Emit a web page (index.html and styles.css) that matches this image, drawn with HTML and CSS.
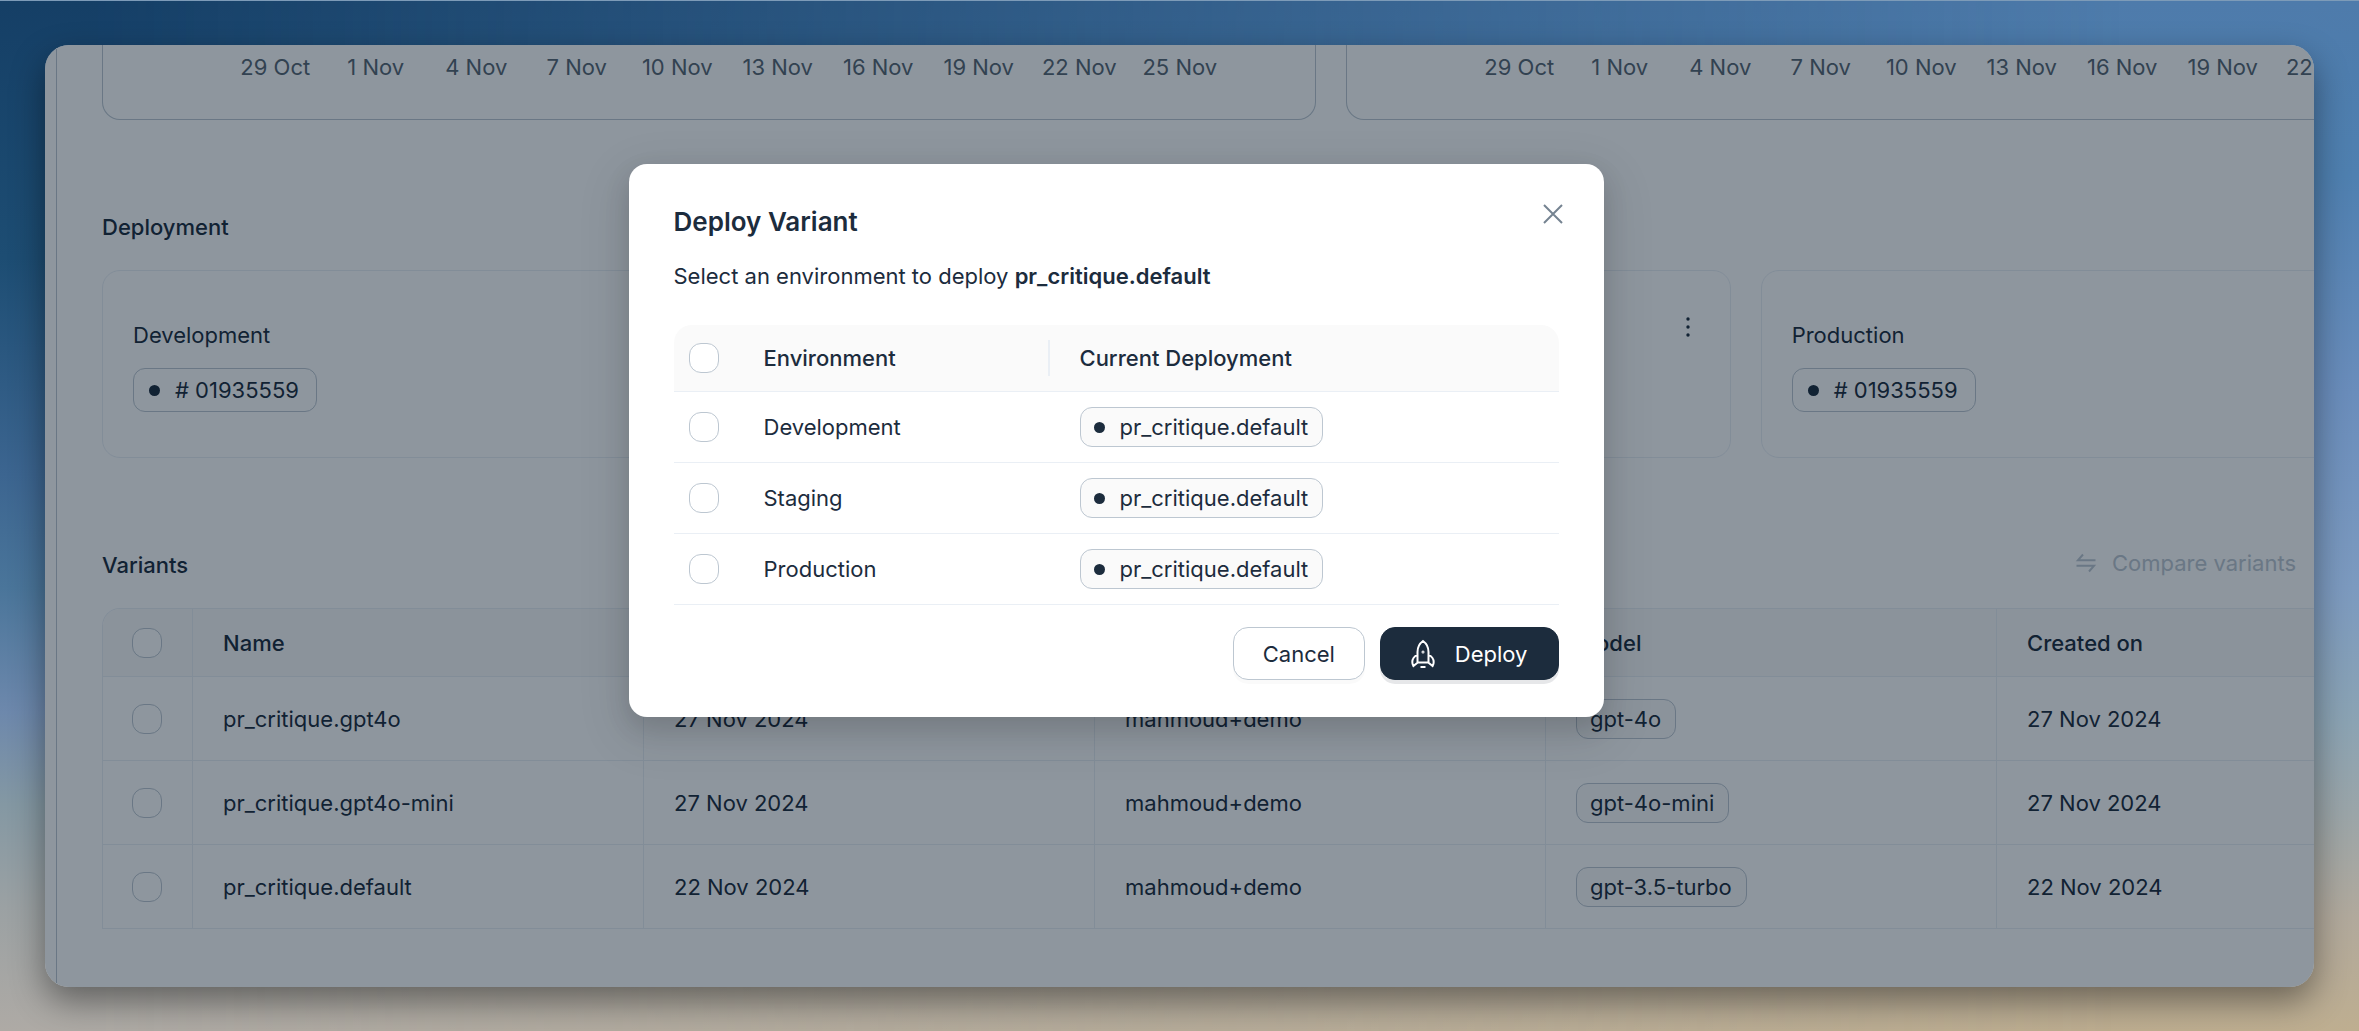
FILE: index.html
```html
<!DOCTYPE html>
<html lang="en">
<head>
<meta charset="utf-8">
<meta name="viewport" content="width=device-width, initial-scale=1">
<title>Deploy Variant</title>
<link rel="stylesheet" href="styles.css">
</head>
<body>
<div class="desktop">
  <div class="window">
    <main class="page">
      <section class="charts">
        <div class="chart">
          <span>29 Oct</span><span>1 Nov</span><span>4 Nov</span><span>7 Nov</span><span>10 Nov</span><span>13 Nov</span><span>16 Nov</span><span>19 Nov</span><span>22 Nov</span><span>25 Nov</span>
        </div>
        <div class="chart">
          <span>29 Oct</span><span>1 Nov</span><span>4 Nov</span><span>7 Nov</span><span>10 Nov</span><span>13 Nov</span><span>16 Nov</span><span>19 Nov</span><span>22 Nov</span>
        </div>
      </section>

      <section class="section">
        <h2 class="heading">Deployment</h2>
        <div class="cards">
          <article class="card">
            <div class="card-body">
              <h3 class="card-title">Development</h3>
              <span class="tag tag-large"><i class="dot"></i># 01935559</span>
            </div>
          </article>
          <article class="card">
            <div class="card-body"></div>
            <button class="more" type="button" aria-label="More actions">
              <svg viewBox="0 0 24 20" width="24" height="20"><circle cx="12" cy="2" r="1.700"/><circle cx="12" cy="10" r="1.700"/><circle cx="12" cy="18" r="1.700"/></svg>
            </button>
          </article>
          <article class="card">
            <div class="card-body">
              <h3 class="card-title">Production</h3>
              <span class="tag tag-large"><i class="dot"></i># 01935559</span>
            </div>
          </article>
        </div>
      </section>

      <section class="section">
        <div class="section-bar">
          <h2 class="heading">Variants</h2>
          <button class="compare" type="button" disabled>
            <svg viewBox="0 0 24 24" width="24" height="24"><path d="M21.500 9.200H4L9 3.500M2.500 14.800H20L15 20.500"/></svg>
            Compare variants
          </button>
        </div>
        <table class="variants">
          <colgroup><col class="col-check"><col class="col-data"><col class="col-data"><col class="col-data"><col class="col-data"><col class="col-data"><col></colgroup>
          <thead>
            <tr><th><input class="check" type="checkbox" aria-label="Select all variants"></th><th scope="col">Name</th><td></td><td></td><th scope="col">Model</th><th scope="col">Created on</th><td></td></tr>
          </thead>
          <tbody>
            <tr><td><input class="check" type="checkbox" aria-label="Select pr_critique.gpt4o"></td><td>pr_critique.gpt4o</td><td>27 Nov 2024</td><td>mahmoud+demo</td><td><span class="tag">gpt-4o</span></td><td>27 Nov 2024</td><td></td></tr>
            <tr><td><input class="check" type="checkbox" aria-label="Select pr_critique.gpt4o-mini"></td><td>pr_critique.gpt4o-mini</td><td>27 Nov 2024</td><td>mahmoud+demo</td><td><span class="tag">gpt-4o-mini</span></td><td>27 Nov 2024</td><td></td></tr>
            <tr><td><input class="check" type="checkbox" aria-label="Select pr_critique.default"></td><td>pr_critique.default</td><td>22 Nov 2024</td><td>mahmoud+demo</td><td><span class="tag">gpt-3.5-turbo</span></td><td>22 Nov 2024</td><td></td></tr>
          </tbody>
        </table>
      </section>
    </main>

    <div class="overlay">
      <div class="dialog" role="dialog" aria-modal="true" aria-labelledby="dialog-title">
        <button class="close" type="button" aria-label="Close">
          <svg viewBox="0 0 32 32" width="32" height="32"><path d="M7 7L25 25M25 7L7 25"/></svg>
        </button>
        <h1 class="dialog-title" id="dialog-title">Deploy Variant</h1>
        <p class="dialog-text">Select an environment to deploy <strong>pr_critique.default</strong></p>
        <table class="environments">
          <colgroup><col class="col-select"><col class="col-env"><col></colgroup>
          <thead>
            <tr><th><input class="check" type="checkbox" aria-label="Select all environments"></th><th scope="col"><div class="divided">Environment</div></th><th scope="col">Current Deployment</th></tr>
          </thead>
          <tbody>
            <tr><td><input class="check" type="checkbox" id="env-dev"></td><td><label for="env-dev">Development</label></td><td><span class="tag"><i class="dot"></i>pr_critique.default</span></td></tr>
            <tr><td><input class="check" type="checkbox" id="env-staging"></td><td><label for="env-staging">Staging</label></td><td><span class="tag"><i class="dot"></i>pr_critique.default</span></td></tr>
            <tr><td><input class="check" type="checkbox" id="env-prod"></td><td><label for="env-prod">Production</label></td><td><span class="tag"><i class="dot"></i>pr_critique.default</span></td></tr>
          </tbody>
        </table>
        <div class="actions">
          <button class="button" type="button">Cancel</button>
          <button class="button button-primary" type="button">
            <svg viewBox="0 0 24 30" width="24" height="30"><path d="M12 2C8.500 4.500 6.500 8.500 6.500 13V23.500H17.500V13C17.500 8.500 15.500 4.500 12 2ZM6.500 15.500C3 17.500 1.300 20 1.300 23C1.300 24.500 1.700 25.800 2.400 27L6.800 23.500M17.500 15.500C21 17.500 22.700 20 22.700 23C22.700 24.500 22.300 25.800 21.600 27L17.200 23.500M9.500 28H14.500"/><circle cx="12" cy="13" r="0.500"/></svg>
            Deploy
          </button>
        </div>
      </div>
    </div>
  </div>
</div>
</body>
</html>
```
FILE: styles.css
```css
:root {
  --ink: #1c2c3d;
  --muted: #586673;
  --line: #bdc7d1;
  --line-soft: #eaeff5;
  --fill: #fafafa;
}

* {
  box-sizing: border-box;
}

body {
  margin: 0;
  font: 400 22px/36px Inter, "Liberation Sans", sans-serif;
  color: var(--ink);
}

h1, h2, h3, p {
  margin: 0;
}

button, input {
  font: inherit;
  color: inherit;
  margin: 0;
}

/* Wallpaper */
.desktop {
  position: relative;
  min-height: 100vh;
  padding: 44px 45px;
  border-top: 1px solid #7d9bb8;
  background: linear-gradient(180deg, #4e7bab 0%, #4f80b0 17%, #6a8dbb 38%, #7c9abf 57%, #8ba3b3 70%, #9ba5a8 79%, #b1a99c 89%, #beae90 100%);
}

.desktop::before {
  content: "";
  position: absolute;
  inset: 0;
  background: linear-gradient(180deg, #153f66 0%, #1d4d73 25%, #3c6590 46%, #4a759a 57%, #6d88ac 69%, #8498a3 78%, #9ba1a3 88%, #aeaaa5 100%);
  mask-image: linear-gradient(90deg, #000 4%, transparent 90%);
}

.window {
  position: relative;
  overflow: hidden;
  padding-left: 11px;
  border-radius: 24px;
  background: #fff;
  box-shadow: 0 14px 34px rgba(0, 0, 0, 0.42);
}

.page {
  border-left: 1px solid var(--line);
  padding: 0 0 58px 45px;
}

/* The canvas runs past the right edge of the window */
.charts, .cards, .variants {
  width: calc(100% + 246px);
}

.charts, .cards {
  display: flex;
  gap: 30px;
}

.chart {
  flex: 1;
  display: grid;
  grid-template-columns: repeat(10, 1fr);
  padding: 4px 85px 34px 122px;
  border: 1px solid var(--line);
  border-top: 0;
  border-radius: 0 0 18px 18px;
  color: var(--muted);
}

.chart span {
  text-align: center;
  white-space: nowrap;
}

.section {
  padding-top: 89px;
}

.heading {
  font-size: 22px;
  font-weight: 500;
}

.cards {
  margin-top: 25px;
}

.card {
  flex: 1;
  display: flex;
  align-items: flex-start;
  justify-content: space-between;
  padding: 46px 30px 45px;
  border: 1px solid var(--line-soft);
  border-radius: 18px;
}

.card-title {
  margin-bottom: 15px;
  font-size: 22px;
  font-weight: 400;
}

.tag {
  display: inline-flex;
  align-items: center;
  height: 40px;
  padding: 0 14px 0 13px;
  border: 1px solid var(--line);
  border-radius: 12px;
  background: var(--fill);
  vertical-align: middle;
}

.tag-large {
  height: 44px;
  padding: 0 17px 0 15px;
  background: none;
}

.dot {
  width: 11px;
  height: 11px;
  margin-right: 15px;
  border-radius: 50%;
  background: var(--ink);
}

.more, .close {
  display: flex;
  padding: 0;
  border: 0;
  background: none;
}

.more svg {
  fill: var(--ink);
}

.section-bar {
  display: flex;
  justify-content: space-between;
  margin-bottom: 25px;
  padding-right: 18px;
}

.compare {
  display: flex;
  align-items: center;
  gap: 14px;
  height: 32px;
  padding: 0;
  border: 0;
  background: none;
  color: var(--line);
}

.compare svg, .close svg, .button svg {
  fill: none;
  stroke: currentColor;
  stroke-width: 2;
}

/* Tables */
table {
  border-collapse: separate;
  border-spacing: 0;
  table-layout: fixed;
}

th, td {
  padding: 0 30px;
  border-bottom: 1px solid var(--line-soft);
  font-weight: 400;
  text-align: left;
  vertical-align: middle;
  white-space: nowrap;
}

th {
  font-weight: 500;
}

.variants {
  border: 1px solid var(--line-soft);
  border-width: 1px 0 0 1px;
  border-radius: 18px 0 0 0;
  overflow: hidden;
}

.variants th, .variants td {
  border-right: 1px solid var(--line-soft);
}

.variants thead tr {
  height: 68px;
}

.variants tbody tr {
  height: 84px;
}

thead th, thead td {
  background: var(--fill);
}

.col-check {
  width: 90px;
}

.variants th:first-child, .variants td:first-child {
  padding: 0 29px;
}

.col-data {
  width: 451px;
}

.check {
  appearance: none;
  display: block;
  width: 30px;
  height: 30px;
  border: 1px solid var(--line);
  border-radius: 12px;
  background: #fff;
}

/* Dialog */
.overlay {
  position: absolute;
  inset: 0;
  display: flex;
  align-items: flex-start;
  justify-content: center;
  padding: 119px 127px 0 0;
  background: rgba(5, 23, 41, 0.45);
}

.dialog {
  position: relative;
  width: 975px;
  padding: 40px 45px 37px;
  border-radius: 18px;
  background: #fff;
  box-shadow: 0 10px 26px rgba(0, 0, 0, 0.12), 0 15px 45px 12px rgba(0, 0, 0, 0.08);
}

.close {
  position: absolute;
  top: 34px;
  right: 35px;
  color: #758391;
}

.dialog-title {
  font-size: 26px;
  font-weight: 600;
}

.dialog-text {
  margin: 18px 0 31px;
}

.dialog-text strong {
  font-weight: 600;
}

.environments {
  width: 100%;
}

.environments thead th:first-child {
  border-top-left-radius: 18px;
}

.environments thead th:last-child {
  border-top-right-radius: 18px;
}

.environments thead tr {
  height: 67px;
}

.environments tbody tr {
  height: 71px;
}

.environments th:first-child, .environments td:first-child {
  padding: 0 15px;
}

.environments th:nth-child(2) {
  padding-right: 0;
}

.divided {
  border-right: 2px solid var(--line-soft);
}

.col-select {
  width: 60px;
}

.col-env {
  width: 316px;
}

.actions {
  display: flex;
  justify-content: flex-end;
  gap: 15px;
  margin-top: 22px;
}

.button {
  display: flex;
  align-items: center;
  gap: 20px;
  height: 53px;
  padding: 0 29px;
  border: 1px solid var(--line);
  border-radius: 15px;
  background: #fff;
  box-shadow: 0 4px 0 rgba(0, 0, 0, 0.02);
}

.button-primary {
  padding: 0 30px;
  border-color: var(--ink);
  background: var(--ink);
  box-shadow: 0 4px 0 rgba(5, 23, 41, 0.1);
  color: #fff;
}
```
